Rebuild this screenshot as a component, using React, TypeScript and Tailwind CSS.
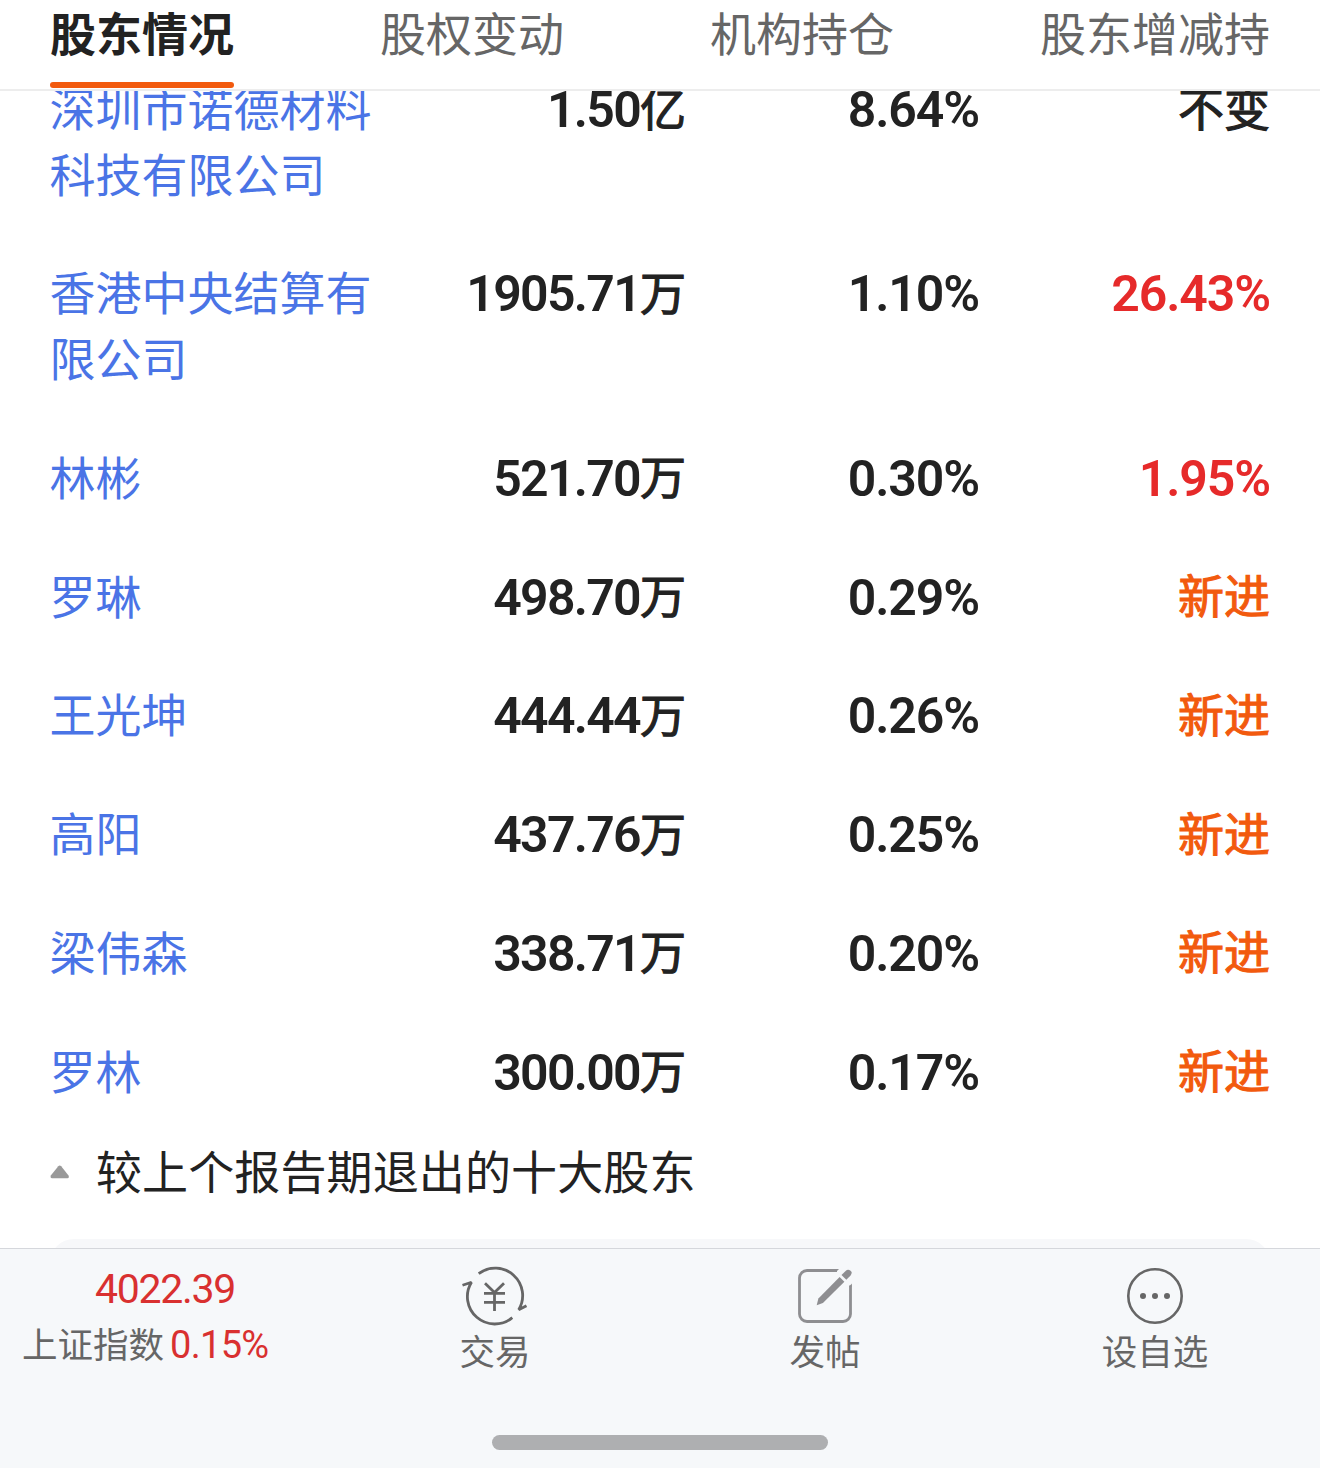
import React from 'react';

type Tone = 'plain' | 'up' | 'fresh';

interface Holder {
  name: string;
  amount: string;
  unit: string;
  ratio: string;
  change: string;
  tone: Tone;
}

const tabs = ['股东情况', '股权变动', '机构持仓', '股东增减持'];

const holders: Holder[] = [
  { name: '深圳市诺德材料科技有限公司', amount: '1.50', unit: '亿', ratio: '8.64%', change: '不变', tone: 'plain' },
  { name: '香港中央结算有限公司', amount: '1905.71', unit: '万', ratio: '1.10%', change: '26.43%', tone: 'up' },
  { name: '林彬', amount: '521.70', unit: '万', ratio: '0.30%', change: '1.95%', tone: 'up' },
  { name: '罗琳', amount: '498.70', unit: '万', ratio: '0.29%', change: '新进', tone: 'fresh' },
  { name: '王光坤', amount: '444.44', unit: '万', ratio: '0.26%', change: '新进', tone: 'fresh' },
  { name: '高阳', amount: '437.76', unit: '万', ratio: '0.25%', change: '新进', tone: 'fresh' },
  { name: '梁伟森', amount: '338.71', unit: '万', ratio: '0.20%', change: '新进', tone: 'fresh' },
  { name: '罗林', amount: '300.00', unit: '万', ratio: '0.17%', change: '新进', tone: 'fresh' },
];

const toneClass: Record<Tone, string> = {
  plain: 'text-[#222222]',
  up: 'text-[#e62a2a]',
  fresh: 'text-[#f25a0e]',
};

function Num({ children, tight }: { children: React.ReactNode; tight?: boolean }) {
  return (
    <span
      className={`font-['Roboto'] text-[50px] font-semibold leading-none ${tight ? 'tracking-[-1.7px]' : 'tracking-[-1.1px]'}`}
    >
      {children}
    </span>
  );
}

function Cjk({ children }: { children: React.ReactNode }) {
  return <span className="relative -top-[1.5px] [-webkit-text-stroke:1.1px_currentColor]">{children}</span>;
}

function HolderRow({ h }: { h: Holder }) {
  return (
    <div className="mb-[53.2px] grid grid-cols-[330px_306px_293px_291px] text-right leading-[65.6px] text-[#222222]">
      <div className="-mt-[1px] -ml-[0.5px] w-[325px] pb-[1px] text-left break-all text-[#4a74e6]">{h.name}</div>
      <div className="h-[65.6px] whitespace-nowrap">
        <Num tight>{h.amount}</Num>
        <Cjk>{h.unit}</Cjk>
      </div>
      <div className="h-[65.6px]">
        <Num>{h.ratio}</Num>
      </div>
      <div className={`h-[65.6px] ${toneClass[h.tone]}`}>
        {h.tone === 'up' ? <Num>{h.change}</Num> : <Cjk>{h.change}</Cjk>}
      </div>
    </div>
  );
}

function TradeIcon() {
  return (
    <svg width="70" height="60" viewBox="0 0 70 60" fill="none" stroke="#666666" strokeWidth="2.8" strokeLinejoin="bevel">
      <path d="M18.700 7.700A27.400 27.400 0 0 1 58.700 43.700L66.500 39.700" />
      <path d="M52.300 51.700A27.400 27.400 0 0 1 11.500 16.200L2.500 19.300" />
      <path d="M25 17.300l9.500 9.300 9.500-9.300M24 27.300h21M24 36.300h21M34.500 26.500v18.500" />
    </svg>
  );
}

function PostIcon() {
  return (
    <svg width="60" height="60" viewBox="-1 -1 60 60" fill="none">
      <path d="M41 3.500H11A7.500 7.500 0 0 0 3.500 11V47A7.500 7.500 0 0 0 11 54.500H47A7.500 7.500 0 0 0 54.500 47V18.500" stroke="#8e8e91" strokeWidth="2.8" />
      <path d="M40 4.900V2.100H43Z" fill="#8e8e91" />
      <path d="M53.100 19.500L55.900 16.500V19.500Z" fill="#8e8e91" />
      <path d="M43.600 9.900L48.400 14.700L26.900 35.900L20.700 38.200L22.400 31.400Z" fill="#8e8e91" />
      <path d="M45.500 8L49.600 3.900Q52 1.800 54.500 3.700T54.400 8.700L50.300 12.800Z" fill="#8e8e91" />
    </svg>
  );
}

function MoreIcon() {
  return (
    <svg width="60" height="60" viewBox="0 0 60 60" fill="none">
      <circle cx="30" cy="30" r="26.7" stroke="#666666" strokeWidth="2.6" />
      <g fill="#666666">
        <circle cx="18" cy="30" r="3" />
        <circle cx="30" cy="30" r="3" />
        <circle cx="42" cy="30" r="3" />
      </g>
    </svg>
  );
}

function Action({ icon, label }: { icon: React.ReactNode; label: string }) {
  return (
    <div className="flex flex-col items-center pt-[17px]">
      <div className="h-[60px]">{icon}</div>
      <div className="-mt-[1px] text-[35.5px] leading-[50px] text-[#666666]">{label}</div>
    </div>
  );
}

export default function App() {
  return (
    <div className="flex h-[1468px] w-[1320px] flex-col overflow-hidden bg-white font-['Noto_Sans_CJK_SC',sans-serif] text-[46px]">
      <header className="flex h-[91px] shrink-0 border-b-2 border-[#ededed] pl-[50px]">
        {tabs.map((t, i) => (
          <div key={t} className="w-[330px] shrink-0">
            <div
              className={
                i === 0
                  ? 'flex h-[88px] w-[184px] flex-col justify-between whitespace-nowrap font-bold leading-[62px] text-[#222222]'
                  : 'whitespace-nowrap leading-[62px] text-[#666666]'
              }
            >
              {t}
              {i === 0 && <div className="h-[6px] rounded-full bg-[#f25a0e]" />}
            </div>
          </div>
        ))}
      </header>

      <main className="h-[1157px] shrink-0 overflow-hidden px-[50px]">
        <div className="-mt-[16px]">
          {holders.map((h) => (
            <HolderRow key={h.name} h={h} />
          ))}
        </div>
        <div className="-mt-[20px] flex h-[66px] items-center leading-[66px] tracking-[0.12px] text-[#222222]">
          <svg width="20" height="14" viewBox="0 0 20 14" className="relative top-[3px] mr-[26px]">
            <path d="M8.300 1.200Q9.700 0 11.200 1.200L18.500 10.500Q19.500 13 17.500 13.200H2Q0 13 .8 10.500Z" fill="#999999" />
          </svg>
          较上个报告期退出的十大股东
        </div>
        <div className="mt-[37px] h-[60px] rounded-[24px] bg-[#f7f8fa]" />
      </main>

      <footer className="flex h-[220px] shrink-0 flex-col items-center border-t border-[#d5d7dc] bg-[#f6f8fa]">
        <div className="grid h-[186px] w-full grid-cols-4">
          <div className="pt-[14px]">
            <div className="text-center font-['Roboto'] text-[41px] leading-[52px] tracking-[-1.3px] text-[#d93030]">4022.39</div>
            <div className="flex h-[56px] items-center gap-[6px] pl-[22px] text-[35.5px] leading-[56px] whitespace-nowrap text-[#666666]">
              上证指数
              <span className="relative top-[2px] font-['Roboto'] text-[38px] tracking-[-0.7px] text-[#d93030]">0.15%</span>
            </div>
          </div>
          <Action icon={<TradeIcon />} label="交易" />
          <Action icon={<PostIcon />} label="发帖" />
          <Action icon={<MoreIcon />} label="设自选" />
        </div>
        <div className="h-[15px] w-[336px] rounded-full bg-[#aeafb1]" />
      </footer>
    </div>
  );
}
